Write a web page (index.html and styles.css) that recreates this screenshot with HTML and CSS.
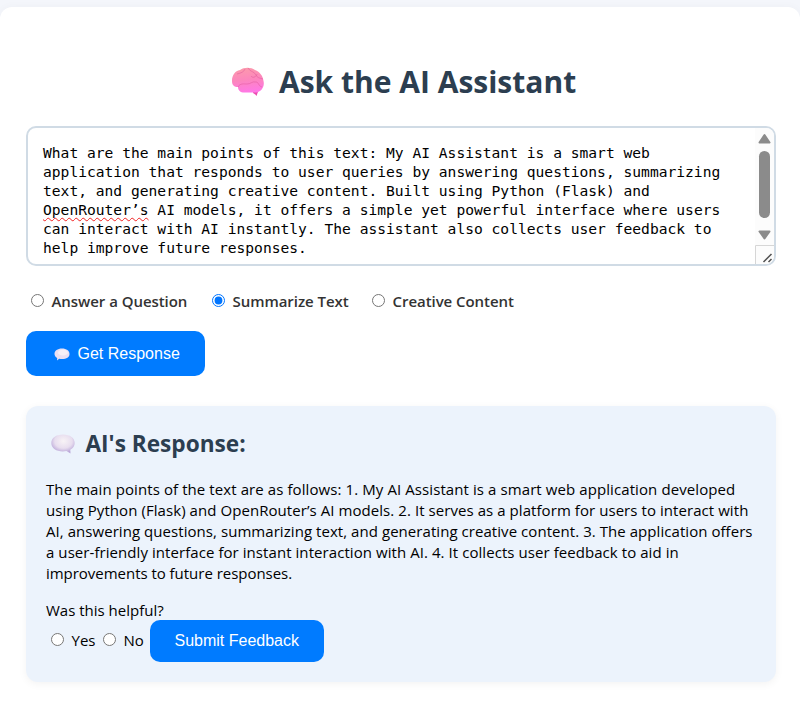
FILE: index.html
```html
<!DOCTYPE html>
<html lang="en">
<head>
<meta charset="utf-8">
<title>AI Assistant</title>
<link rel="stylesheet" href="styles.css">
</head>
<body>
<main class="container">
  <h1 class="title">
    <svg class="brain" viewBox="0 0 34 30" width="34" height="30" aria-hidden="true">
      <defs><linearGradient id="bg" x1="0.3" y1="0" x2="0.45" y2="1"><stop offset="0" stop-color="#fc9aab"/><stop offset=".5" stop-color="#fc86bd"/><stop offset="1" stop-color="#ff78e6"/></linearGradient></defs>
      <path d="M22 22 L28 22 L25.5 29 Q24 27 22 26Z" fill="#ec4bb0"/>
      <path d="M1 14C1 8 4 4 9 3C13 0 20 0 24 3C29 5 32 9 32.500 14C34 20 30 25 25 25.500H12C8 25 7 22 7 20C3 20 1 18 1 14Z" fill="url(#bg)"/>
      <path d="M7 20C9 16 13 17 16 17C20 17 21 14 25 15M14 2C13 5 10 6 6 7M17 1C19 5 23 4 25 8C26 11 29 11 32 12M20 9C22 12 26 9 26 7M25 15C28 15 27 19 31 20" fill="none" stroke="#e0589b" stroke-width="1" opacity=".5"/>
    </svg>
    <span>Ask the AI Assistant</span>
  </h1>

  <div class="prompt">
    <div class="prompt-text">What are the main points of this text: My AI Assistant is a smart web<br>application that responds to user queries by answering questions, summarizing<br>text, and generating creative content. Built using Python (Flask) and<br><span class="misspelled">OpenRouter’s</span> AI models, it offers a simple yet powerful interface where users<br>can interact with AI instantly. The assistant also collects user feedback to<br>help improve future responses.</div>
    <div class="scrollbar">
      <svg width="19" height="136" viewBox="0 0 19 136" aria-hidden="true">
        <path d="M9.500 7L14.500 14.500H4.500Z" fill="#8b8b8b" stroke="#8b8b8b" stroke-width="2" stroke-linejoin="round"/>
        <rect x="4" y="23" width="11" height="67" rx="5.500" fill="#8b8b8b"/>
        <path d="M4.500 103.500H14.500L9.500 110.500Z" fill="#8b8b8b" stroke="#8b8b8b" stroke-width="2" stroke-linejoin="round"/>
        <path d="M.5 136V117.500H19" fill="none" stroke="#d6d6d6"/>
        <path d="M8.500 134L16.500 126M13.500 134L16.500 131" stroke="#505050" stroke-width="1.500"/>
      </svg>
    </div>
  </div>

  <div class="modes">
    <label class="mode m1"><input type="radio" name="mode"><span>Answer a Question</span></label>
    <label class="mode m2"><input type="radio" name="mode" checked><span>Summarize Text</span></label>
    <label class="mode"><input type="radio" name="mode"><span>Creative Content</span></label>
  </div>

  <button class="btn get" type="button">
    <svg width="16" height="13" viewBox="0 0 16 13" aria-hidden="true"><path d="M8 .5C12.500 .5 15.500 2.800 15.500 6S12.500 11 8 11C7 11 6 11 5.200 10.700L3 12.500L3.200 10C1.500 9 .5 7.500 .5 6C.5 2.800 3.500 .5 8 .5Z" fill="#e9dff2"/><ellipse cx="9" cy="4.500" rx="5" ry="3" fill="#f5eff7"/></svg>
    <span>Get Response</span>
  </button>

  <section class="response">
    <h2 class="subtitle">
      <svg width="24" height="20" viewBox="0 0 24 20" aria-hidden="true">
        <defs><radialGradient id="bub" cx=".52" cy=".35" r=".62"><stop offset="0" stop-color="#f8f3f6"/><stop offset=".6" stop-color="#e8deef"/><stop offset="1" stop-color="#b9a6d8"/></radialGradient></defs>
        <path d="M12 .5C19 .5 23.700 4 23.700 9C23.700 12 22 14.300 19.300 15.700L19.500 19.500L15.500 17C8 18.500 .3 15.500 .3 9C.3 4 5 .5 12 .5Z" fill="url(#bub)"/>
      </svg>
      <span>AI's Response:</span>
    </h2>
    <p class="answer"><span class="a1">The main points of the text are as follows: 1. My AI Assistant is a smart web application developed</span><br><span class="a2">using Python (Flask) and OpenRouter’s AI models. 2. It serves as a platform for users to interact with</span><br><span class="a3">AI, answering questions, summarizing text, and generating creative content. 3. The application offers</span><br><span class="a4">a user-friendly interface for instant interaction with AI. 4. It collects user feedback to aid in</span><br><span class="a5">improvements to future responses.</span></p>
    <div class="helpful">Was this helpful?</div>
    <div class="feedback">
      <label class="yes"><input type="radio" name="helpful"><span>Yes</span></label>
      <label class="no"><input type="radio" name="helpful"><span>No</span></label>
      <button class="btn submit" type="button"><span>Submit Feedback</span></button>
    </div>
  </section>
</main>
</body>
</html>
```
FILE: styles.css
```css
* { box-sizing: border-box; }
body {
  margin: 0;
  padding-top: 7px;
  height: 708px;
  overflow: hidden;
  background: #f4f6fb;
  color: #000;
  font-family: "Open Sans", "Noto Sans", sans-serif;
  font-size: 15px;
}
.container {
  height: 701px;
  padding: 55px 24px 0 26px;
  background: #fff;
  border-radius: 12px 12px 0 0;
  box-shadow: 0 0 10px rgba(0, 0, 0, .03);
}
.title {
  display: flex;
  gap: 14px;
  height: 40px;
  margin: 0 0 24px 205px;
  color: #2c3e50;
  font-size: 30px;
  line-height: 40px;
  font-weight: 700;
  white-space: nowrap;
}
.brain { margin-top: 5px; }
.prompt {
  display: flex;
  justify-content: space-between;
  width: 750px;
  height: 140px;
  border: 2px solid #d0dbe5;
  border-radius: 10px;
  overflow: hidden;
}
.prompt-text {
  padding: 15px 0 0 15px;
  font: 14.610px/19px "DejaVu Sans Mono", monospace;
  white-space: nowrap;
}
.misspelled {
  text-decoration: underline wavy #f02020 1.2px;
  text-decoration-skip-ink: none;
  text-underline-offset: 2px;
}
.scrollbar { width: 19px; flex: none; background: #fcfcfc; }
.scrollbar svg { display: block; }
input { width: 13px; height: 13px; margin: 0; flex: none; accent-color: #0075ff; }
.modes {
  display: flex;
  height: 22px;
  margin: 24px 0 19px 5px;
  font-weight: 600;
  color: #333;
  line-height: 22px;
  letter-spacing: -.05px;
  white-space: nowrap;
}
.mode { display: flex; gap: 7.5px; }
.mode input { margin-top: 4px; }
.m1 { width: 181px; }
.m2 { width: 160px; }
.btn {
  display: flex;
  align-items: center;
  border: 0;
  border-radius: 10px;
  background: #007bff;
  color: #fff;
  font: 16px "Liberation Sans", Arial, sans-serif;
  white-space: nowrap;
}
.get { width: 179px; height: 45px; padding: 1px 0 0 28px; gap: 7.5px; }
.response {
  width: 750px;
  height: 276px;
  margin-top: 30px;
  padding: 20px 20px 0;
  background: #ecf3fc;
  border-radius: 12px;
  box-shadow: 0 2px 8px rgba(0, 0, 0, .05);
}
.subtitle {
  display: flex;
  gap: 10.500px;
  height: 34px;
  margin: 0 0 19px 5px;
  color: #2c3e50;
  font-size: 22.650px;
  line-height: 36px;
  white-space: nowrap;
}
.subtitle svg { margin-top: 8px; }
.answer { margin: 0 0 16px; line-height: 21px; white-space: nowrap; }
.a1 { letter-spacing: .09px; }
.a2 { letter-spacing: .065px; }
.a3 { letter-spacing: .055px; }
.a4 { letter-spacing: .065px; }
.a5 { letter-spacing: -.03px; }
.helpful { height: 20px; line-height: 20px; }
.feedback { display: flex; align-items: center; height: 42px; margin: 0 0 0 5px; }
.feedback label { display: flex; align-items: center; gap: 7.5px; padding-bottom: 3px; }
.yes { width: 52px; }
.no { width: 47px; }
.submit { width: 174px; height: 42px; padding: 0 0 0 24.500px; }
```
